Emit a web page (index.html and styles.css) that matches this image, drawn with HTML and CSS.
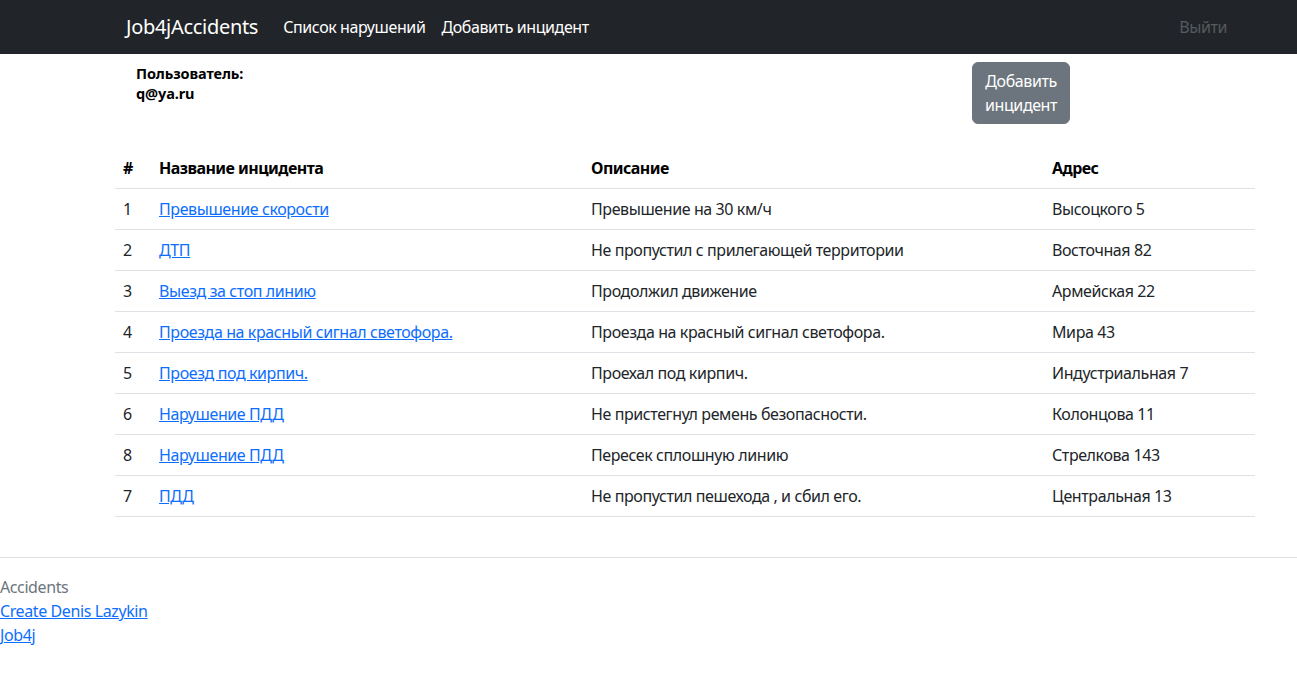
FILE: index.html
```html
<!DOCTYPE html>
<html lang="ru">
<head>
<meta charset="utf-8">
<title>Accidents</title>
<link rel="stylesheet" href="styles.css">
</head>
<body>
<nav class="navbar">
  <div class="nav-inner">
    <a class="brand" href="#">Job4jAccidents</a>
    <a class="nav-link" href="#">Список нарушений</a>
    <a class="nav-link" href="#">Добавить инцидент</a>
    <a class="nav-link logout" href="#">Выйти</a>
  </div>
</nav>
<main class="container">
  <div class="top-row">
    <div class="user">Пользователь:<br>q@ya.ru</div>
    <a class="btn" href="#">Добавить<br>инцидент</a>
  </div>
  <table class="table">
    <thead>
      <tr><th class="c-num">#</th><th class="c-name">Название инцидента</th><th class="c-desc">Описание</th><th>Адрес</th></tr>
    </thead>
    <tbody>
      <tr><td>1</td><td><a href="#">Превышение скорости</a></td><td>Превышение на 30 км/ч</td><td>Высоцкого 5</td></tr>
      <tr><td>2</td><td><a href="#">ДТП</a></td><td>Не пропустил с прилегающей территории</td><td>Восточная 82</td></tr>
      <tr><td>3</td><td><a href="#">Выезд за стоп линию</a></td><td>Продолжил движение</td><td>Армейская 22</td></tr>
      <tr><td>4</td><td><a href="#">Проезда на красный сигнал светофора.</a></td><td>Проезда на красный сигнал светофора.</td><td>Мира 43</td></tr>
      <tr><td>5</td><td><a href="#">Проезд под кирпич.</a></td><td>Проехал под кирпич.</td><td>Индустриальная 7</td></tr>
      <tr><td>6</td><td><a href="#">Нарушение ПДД</a></td><td>Не пристегнул ремень безопасности.</td><td>Колонцова 11</td></tr>
      <tr><td>8</td><td><a href="#">Нарушение ПДД</a></td><td>Пересек сплошную линию</td><td>Стрелкова 143</td></tr>
      <tr><td>7</td><td><a href="#">ПДД</a></td><td>Не пропустил пешехода , и сбил его.</td><td>Центральная 13</td></tr>
    </tbody>
  </table>
</main>
<footer class="footer">
  <div class="muted">Accidents</div>
  <a href="#">Create Denis Lazykin</a><br>
  <a href="#">Job4j</a>
</footer>
</body>
</html>
```

FILE: styles.css
```css
* { box-sizing: border-box; }
body {
  margin: 0;
  font-family: "Noto Sans", "Open Sans", sans-serif;
  font-size: 16px;
  line-height: 1.5;
  letter-spacing: -0.4px;
  color: #212529;
  background: #fff;
}
a { color: #0d6efd; }
.navbar {
  background: #212529;
  height: 54px;
}
.nav-inner {
  display: flex;
  align-items: center;
  height: 54px;
  padding: 0 70px 0 126px;
}
.brand {
  color: #fff;
  text-decoration: none;
  font-size: 20px;
  letter-spacing: -0.3px;
  margin-right: 25px;
}
.nav-link {
  color: #fff;
  text-decoration: none;
  margin-right: 16px;
}
.logout {
  margin-left: auto;
  margin-right: 0;
  color: rgba(255,255,255,.25);
}
.container {
  padding: 0 42px 0 115px;
}
.top-row {
  display: flex;
  padding-top: 8px;
}
.user {
  font-weight: 700;
  font-size: 14.5px;
  line-height: 20px;
  letter-spacing: -0.1px;
  color: #000;
  margin: 1px 0 0 21px;
  width: 836px;
}
.btn {
  display: inline-block;
  background: #6c757d;
  color: #fff;
  text-decoration: none;
  border-radius: 6px;
  padding: 6px 12px;
  border: 1px solid #6c757d;
  text-align: center;
}
.table {
  width: 1140px;
  border-collapse: collapse;
  margin-top: 24px;
}
.table th, .table td {
  text-align: left;
  padding: 8px;
  border-bottom: 1px solid #dee2e6;
  vertical-align: top;
}
.table th { font-weight: 700; letter-spacing: -0.55px; color: #000; }
.c-num { width: 36px; }
.c-name { width: 432px; }
.c-desc { width: 461px; }
.footer {
  margin-top: 40px;
  border-top: 1px solid #dee2e6;
  padding-top: 17px;
}
.muted { color: #6c757d; }
```
